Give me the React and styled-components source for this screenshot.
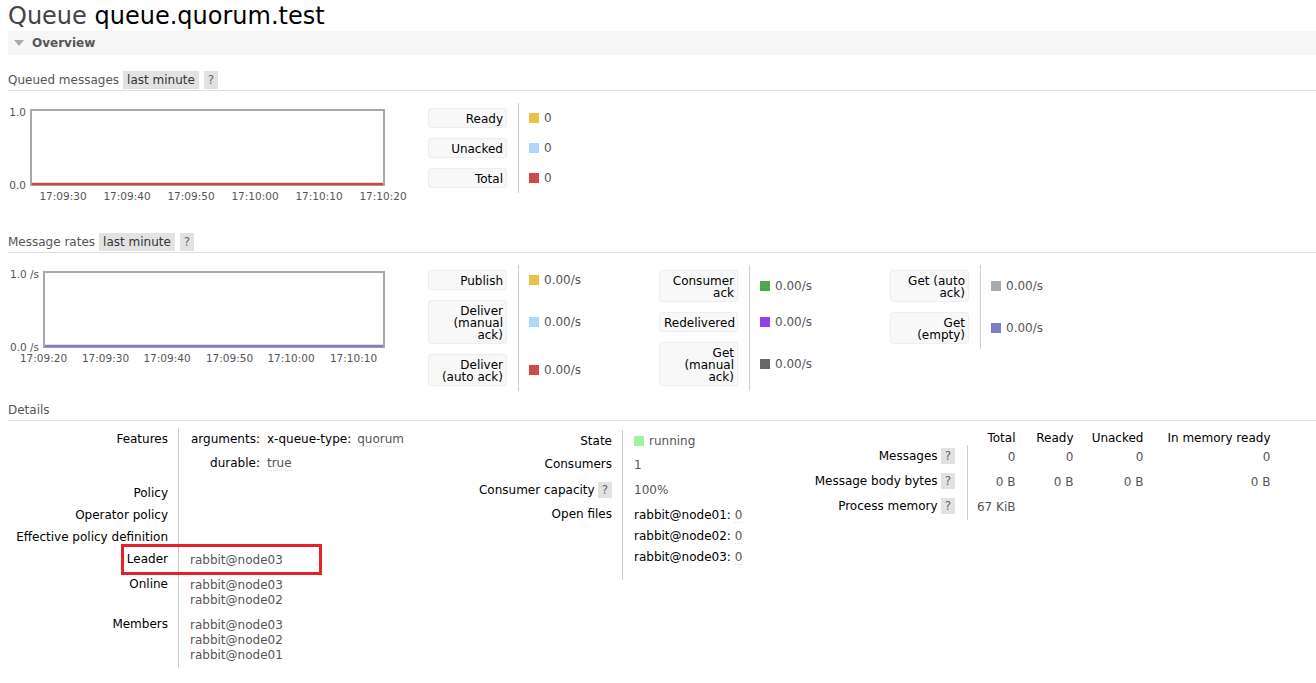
import React from 'react'
import styled, { createGlobalStyle } from 'styled-components'

const GlobalStyle = createGlobalStyle`
  html, body {
    margin: 0;
    padding: 0;
    background: #fff;
  }
  body {
    font-family: Verdana, "DejaVu Sans", sans-serif;
    font-size: 12px;
    line-height: 15px;
    color: #000;
  }
`

const Page = styled.div`
  padding: 2px 0 20px 8px;
  overflow: hidden;
`

const Title = styled.h1`
  margin: 0;
  font-size: 24px;
  line-height: 29px;
  font-weight: normal;
  color: #444;
  & b {
    font-weight: normal;
    color: #000;
  }
`

const SectionBar = styled.div`
  display: flex;
  align-items: center;
  height: 24px;
  padding-left: 6px;
  background: #f6f6f6;
  font-weight: bold;
  color: #555;
`

const Caret = styled.span`
  width: 0;
  height: 0;
  margin-right: 8px;
  border-left: 5.5px solid transparent;
  border-right: 5.5px solid transparent;
  border-top: 6px solid #aaa;
`

const Heading = styled.h3`
  display: flex;
  align-items: flex-start;
  height: 19px;
  margin: ${p => p.$top}px 0 0;
  border-bottom: 1px solid #ddd;
  font-size: 12px;
  line-height: 19px;
  font-weight: normal;
  color: #555;
`

const RangePill = styled.span`
  margin-left: 4px;
  padding: 0 4px;
  background: #e3e3e3;
  color: #333;
  line-height: 18px;
  padding-top: 1px;
  height: 17px;
  line-height: 17px;
`

const HelpTag = styled.span`
  display: inline-block;
  margin-left: ${p => p.$ml ?? 5}px;
  padding: 0 4px;
  background: #e2e2e2;
  color: #666;
  line-height: ${p => p.$h || 18}px;
`

const ChartRow = styled.div`
  display: flex;
  align-items: flex-start;
  margin-top: 12px;
`

const ChartSvg = styled.svg`
  flex: none;
  margin-right: 10px;
  font-family: Verdana, "DejaVu Sans", sans-serif;
  font-size: 10.5px;
  fill: #555;
`

const LegendTable = styled.table`
  flex: none;
  border-collapse: collapse;
  width: ${p => (p.$width ? `${p.$width}px` : 'auto')};
`

const LegendKey = styled.th`
  width: 79px;
  padding: 5px 11px 5px 0;
  border-right: 1px solid #ccc;
  font-weight: normal;
  vertical-align: top;
`

const LegendLabel = styled.div`
  box-sizing: border-box;
  width: 79px;
  padding: 4px 3px 2px 4px;
  border: 1px solid #eee;
  border-radius: 3px;
  background: #f8f8f8;
  text-align: right;
  line-height: 12px;
`

const LegendValue = styled.td`
  padding: 1px 0 0 10px;
  vertical-align: middle;
  white-space: nowrap;
  color: #555;
`

const Swatch = styled.span`
  display: inline-block;
  width: 10px;
  height: 10px;
  margin-right: 5px;
  background: ${p => p.$color};
  vertical-align: -1px;
`

const DetailsRow = styled.div`
  display: flex;
  align-items: flex-start;
  margin-top: 7px;
`

const FactsBlock = styled.div`
  position: relative;
  flex: none;
  width: ${p => (p.$width ? `${p.$width}px` : 'auto')};
  margin-top: ${p => p.$top || 0}px;
`

const FactsTable = styled.table`
  border-collapse: collapse;
`

const FactsKey = styled.th`
  width: ${p => p.$w}px;
  padding: ${p => p.$pt ?? 3.5}px ${p => p.$pr || 10}px 3.5px 0;
  border-right: 1px solid #ccc;
  font-weight: normal;
  text-align: right;
  white-space: nowrap;
  vertical-align: top;
`

const FactsVal = styled.td`
  padding: ${p => p.$pad || '5px 0 5px 11px'};
  color: #555;
  white-space: nowrap;
  vertical-align: top;
`

const KeyGrid = styled.div`
  display: grid;
  grid-template-columns: auto auto;
  justify-content: start;
  column-gap: ${p => p.$gap || 7}px;
`

const GridKey = styled.span`
  padding: ${p => p.$pad || '4.5px 0'};
  color: #000;
  text-align: right;
`

const GridVal = styled.span`
  padding: ${p => p.$pad || '4.5px 0'};
  color: #555;
`

const Plain = styled.span`
  color: #000;
  margin-right: 6px;
`

const Abbr = styled.span`
  border-bottom: 1px dotted #ddd;
`

const StateDot = styled.span`
  display: inline-block;
  width: 10px;
  height: 10px;
  margin-right: 5px;
  background: #9cf59c;
  vertical-align: -1px;
`

const ColHead = styled.th`
  width: ${p => p.$w}px;
  padding: 3.5px 0 0;
  font-weight: normal;
  line-height: 13px;
  text-align: right;
  white-space: nowrap;
`

const NumCell = styled.td`
  padding: 5px 0;
  color: #555;
  text-align: right;
  white-space: nowrap;
  vertical-align: top;
`

const Annotation = styled.div`
  position: absolute;
  left: 113px;
  top: 116px;
  box-sizing: border-box;
  width: 201px;
  height: 31px;
  border: 3px solid #e8202a;
  pointer-events: none;
`

const Chart = ({ plotLeft, yTop, yBottom, ticks, lineColor }) => (
  <ChartSvg width="410" height="100" viewBox="0 0 410 100">
    <rect
      x={plotLeft + 1}
      y="7"
      width={375 - plotLeft}
      height="75"
      fill="#fff"
      stroke="#a8a8a8"
      strokeWidth="2"
    />
    <line x1={plotLeft + 2} x2="375" y1="81" y2="81" stroke={lineColor} strokeWidth="2.5" />
    <text x={plotLeft - 4} y="9" textAnchor="end" dominantBaseline="central">
      {yTop}
    </text>
    <text x={plotLeft - 4} y="82" textAnchor="end" dominantBaseline="central">
      {yBottom}
    </text>
    {ticks.map(([label, x]) => (
      <text key={label} x={x} y="93" textAnchor="middle" dominantBaseline="central">
        {label}
      </text>
    ))}
  </ChartSvg>
)

const Legend = ({ rows, width }) => (
  <LegendTable $width={width}>
    <tbody>
      {rows.map(row => (
        <tr key={row.label}>
          <LegendKey>
            <LegendLabel>{row.label}</LegendLabel>
          </LegendKey>
          <LegendValue>
            <Swatch $color={row.color} />
            {row.value}
          </LegendValue>
        </tr>
      ))}
    </tbody>
  </LegendTable>
)

const queuedTicks = [
  ['17:09:30', 55],
  ['17:09:40', 119],
  ['17:09:50', 183],
  ['17:10:00', 247],
  ['17:10:10', 311],
  ['17:10:20', 375],
]

const rateTicks = [
  ['17:09:20', 35.5],
  ['17:09:30', 97.5],
  ['17:09:40', 159],
  ['17:09:50', 221.5],
  ['17:10:00', 283],
  ['17:10:10', 345.5],
]

const queuedLegend = [
  { label: 'Ready', color: '#edc240', value: '0' },
  { label: 'Unacked', color: '#afd8f8', value: '0' },
  { label: 'Total', color: '#cb4b4b', value: '0' },
]

const rateLegend = [
  [
    { label: 'Publish', color: '#edc240', value: '0.00/s' },
    { label: 'Deliver (manual ack)', color: '#afd8f8', value: '0.00/s' },
    { label: 'Deliver (auto ack)', color: '#cb4b4b', value: '0.00/s' },
  ],
  [
    { label: 'Consumer ack', color: '#4da74d', value: '0.00/s' },
    { label: 'Redelivered', color: '#9440ed', value: '0.00/s' },
    { label: 'Get (manual ack)', color: '#666666', value: '0.00/s' },
  ],
  [
    { label: 'Get (auto ack)', color: '#aaaaaa', value: '0.00/s' },
    { label: 'Get (empty)', color: '#7f7cc8', value: '0.00/s' },
  ],
]

const nodes = ['rabbit@node01', 'rabbit@node02', 'rabbit@node03']

const totals = [
  { label: 'Messages', values: ['0', '0', '0', '0'] },
  { label: 'Message body bytes', values: ['0 B', '0 B', '0 B', '0 B'] },
  { label: 'Process memory', values: ['67 KiB', '', '', ''] },
]

const colWidths = [48, 58, 70, 127]

const App = () => (
  <Page>
    <GlobalStyle />
    <Title>
      Queue <b>queue.quorum.test</b>
    </Title>
    <SectionBar>
      <Caret />
      Overview
    </SectionBar>

    <Heading $top={16}>
      Queued messages
      <RangePill>last minute</RangePill>
      <HelpTag>?</HelpTag>
    </Heading>
    <ChartRow>
      <Chart plotLeft={22} yTop="1.0" yBottom="0.0" ticks={queuedTicks} lineColor="#cb4b4b" />
      <Legend rows={queuedLegend} />
    </ChartRow>

    <Heading $top={30}>
      Message rates
      <RangePill>last minute</RangePill>
      <HelpTag>?</HelpTag>
    </Heading>
    <ChartRow>
      <Chart plotLeft={35} yTop="1.0 /s" yBottom="0.0 /s" ticks={rateTicks} lineColor="#7f7cc8" />
      {rateLegend.map((rows, i) => (
        <Legend key={i} rows={rows} width={i < rateLegend.length - 1 ? 231 : undefined} />
      ))}
    </ChartRow>

    <Heading $top={10}>Details</Heading>
    <DetailsRow>
      <FactsBlock $width={461}>
        <FactsTable>
          <tbody>
            <tr>
              <FactsKey $w={160}>Features</FactsKey>
              <FactsVal $pad="0 0 7px 12px">
                <KeyGrid>
                  <GridKey $pad="3.5px 0 4.5px">arguments:</GridKey>
                  <GridVal $pad="3.5px 0 4.5px">
                    <Plain>x-queue-type:</Plain>
                    <Abbr>quorum</Abbr>
                  </GridVal>
                  <GridKey>durable:</GridKey>
                  <GridVal>
                    <Abbr>true</Abbr>
                  </GridVal>
                </KeyGrid>
              </FactsVal>
            </tr>
            <tr>
              <FactsKey $w={160}>Policy</FactsKey>
              <FactsVal $pad="0" />
            </tr>
            <tr>
              <FactsKey $w={160}>Operator policy</FactsKey>
              <FactsVal $pad="0" />
            </tr>
            <tr>
              <FactsKey $w={160}>Effective policy definition</FactsKey>
              <FactsVal $pad="0" />
            </tr>
            <tr>
              <FactsKey $w={160}>Leader</FactsKey>
              <FactsVal>rabbit@node03</FactsVal>
            </tr>
            <tr>
              <FactsKey $w={160}>Online</FactsKey>
              <FactsVal>
                rabbit@node03
                <br />
                rabbit@node02
              </FactsVal>
            </tr>
            <tr>
              <FactsKey $w={160}>Members</FactsKey>
              <FactsVal>
                rabbit@node03
                <br />
                rabbit@node02
                <br />
                rabbit@node01
              </FactsVal>
            </tr>
          </tbody>
        </FactsTable>
        <Annotation />
      </FactsBlock>

      <FactsBlock $width={337} $top={2}>
        <FactsTable>
          <tbody>
            <tr>
              <FactsKey $w={143}>State</FactsKey>
              <FactsVal $pad="3.5px 0 4.5px 11px">
                <StateDot />
                running
              </FactsVal>
            </tr>
            <tr>
              <FactsKey $w={143}>Consumers</FactsKey>
              <FactsVal $pad="5px 0 4px 11px">1</FactsVal>
            </tr>
            <tr>
              <FactsKey $w={143} $pt={4.5}>
                Consumer capacity
                <HelpTag $ml={3} $h={16}>
                  ?
                </HelpTag>
              </FactsKey>
              <FactsVal $pad="6px 0 4px 11px">100%</FactsVal>
            </tr>
            <tr>
              <FactsKey $w={143} $pt={4.5}>Open files</FactsKey>
              <FactsVal $pad="3px 0 12px 11px">
                <KeyGrid $gap={4}>
                  {nodes.map(node => (
                    <React.Fragment key={node}>
                      <GridKey $pad="3px 0">{node}:</GridKey>
                      <GridVal $pad="3px 0">
                        <Abbr>0</Abbr>
                      </GridVal>
                    </React.Fragment>
                  ))}
                </KeyGrid>
              </FactsVal>
            </tr>
          </tbody>
        </FactsTable>
      </FactsBlock>

      <FactsBlock>
        <FactsTable>
          <thead>
            <tr>
              <td />
              <ColHead $w={colWidths[0]}>Total</ColHead>
              <ColHead $w={colWidths[1]}>Ready</ColHead>
              <ColHead $w={colWidths[2]}>Unacked</ColHead>
              <ColHead $w={colWidths[3]}>In memory ready</ColHead>
            </tr>
          </thead>
          <tbody>
            {totals.map(row => (
              <tr key={row.label}>
                <FactsKey $w={149} $pr={12}>
                  {row.label}
                  <HelpTag $ml={3} $h={16}>
                    ?
                  </HelpTag>
                </FactsKey>
                {row.values.map((v, i) => (
                  <NumCell key={i}>{v}</NumCell>
                ))}
              </tr>
            ))}
          </tbody>
        </FactsTable>
      </FactsBlock>
    </DetailsRow>
  </Page>
)

export default App
